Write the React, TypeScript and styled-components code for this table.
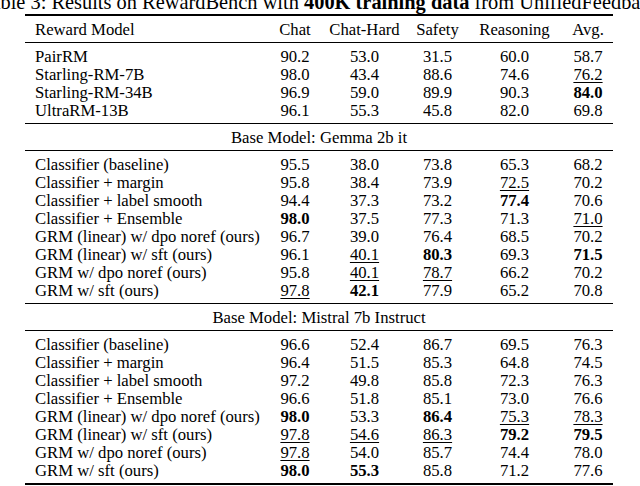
import React from 'react';
import styled, { createGlobalStyle } from 'styled-components';

const GlobalStyle = createGlobalStyle`
  html, body {
    margin: 0;
    padding: 0;
    background: #fff;
  }
  body {
    font-family: "Liberation Serif", "Times New Roman", serif;
    color: #000;
  }
`;

const Page = styled.div`
  width: 640px;
  height: 486px;
  overflow: hidden;
  background: #fff;
`;

// the caption is wider than the page and is cut at both sides
const Caption = styled.div`
  display: flex;
  justify-content: center;
  height: 14px;
  line-height: 4px;
  font-size: 20.4px;
  white-space: nowrap;

  b {
    font-weight: 700;
  }
`;

const Table = styled.div`
  margin-left: 25px;
  width: 588px;
  font-size: 16.7px;
`;

const Rule = styled.div<{ $thick?: boolean; $above: number; $below: number }>`
  height: ${(p) => (p.$thick ? 2 : 1)}px;
  background: #000;
  margin: ${(p) => p.$above}px 0 ${(p) => p.$below}px;
`;

const Row = styled.div`
  display: grid;
  grid-template-columns: 245px 50px 89px 57px 97px 50px;
  height: 18px;
  line-height: 18px;
`;

const Cell = styled.span<{ $mark?: 'b' | 'u' }>`
  text-align: center;
  white-space: nowrap;
  font-weight: ${(p) => (p.$mark === 'b' ? 700 : 400)};
  text-decoration: ${(p) => (p.$mark === 'u' ? 'underline' : 'none')};
  text-decoration-thickness: 1px;
  text-underline-offset: 2px;

  &:first-child {
    text-align: left;
    padding-left: 10px;
  }
`;

const GroupTitle = styled.div`
  height: 18px;
  line-height: 18px;
  text-align: center;
`;

// "*" marks a bold value, "_" an underlined one
type Line = [string, string, string, string, string, string];

const header: Line = ['Reward Model', 'Chat', 'Chat-Hard', 'Safety', 'Reasoning', 'Avg.'];

const baselines: Line[] = [
  ['PairRM', '90.2', '53.0', '31.5', '60.0', '58.7'],
  ['Starling-RM-7B', '98.0', '43.4', '88.6', '74.6', '_76.2'],
  ['Starling-RM-34B', '96.9', '59.0', '89.9', '90.3', '*84.0'],
  ['UltraRM-13B', '96.1', '55.3', '45.8', '82.0', '69.8'],
];

const groups: { title: string; rows: Line[] }[] = [
  {
    title: 'Base Model: Gemma 2b it',
    rows: [
      ['Classifier (baseline)', '95.5', '38.0', '73.8', '65.3', '68.2'],
      ['Classifier + margin', '95.8', '38.4', '73.9', '_72.5', '70.2'],
      ['Classifier + label smooth', '94.4', '37.3', '73.2', '*77.4', '70.6'],
      ['Classifier + Ensemble', '*98.0', '37.5', '77.3', '71.3', '_71.0'],
      ['GRM (linear) w/ dpo noref (ours)', '96.7', '39.0', '76.4', '68.5', '70.2'],
      ['GRM (linear) w/ sft (ours)', '96.1', '_40.1', '*80.3', '69.3', '*71.5'],
      ['GRM w/ dpo noref (ours)', '95.8', '_40.1', '_78.7', '66.2', '70.2'],
      ['GRM w/ sft (ours)', '_97.8', '*42.1', '77.9', '65.2', '70.8'],
    ],
  },
  {
    title: 'Base Model: Mistral 7b Instruct',
    rows: [
      ['Classifier (baseline)', '96.6', '52.4', '86.7', '69.5', '76.3'],
      ['Classifier + margin', '96.4', '51.5', '85.3', '64.8', '74.5'],
      ['Classifier + label smooth', '97.2', '49.8', '85.8', '72.3', '76.3'],
      ['Classifier + Ensemble', '96.6', '51.8', '85.1', '73.0', '76.6'],
      ['GRM (linear) w/ dpo noref (ours)', '*98.0', '53.3', '*86.4', '_75.3', '_78.3'],
      ['GRM (linear) w/ sft (ours)', '_97.8', '_54.6', '_86.3', '*79.2', '*79.5'],
      ['GRM w/ dpo noref (ours)', '_97.8', '54.0', '85.7', '74.4', '78.0'],
      ['GRM w/ sft (ours)', '*98.0', '*55.3', '85.8', '71.2', '77.6'],
    ],
  },
];

const TableRow = ({ line }: { line: Line }) => (
  <Row>
    {line.map((v, i) => {
      const mark = v[0] === '*' ? 'b' : v[0] === '_' ? 'u' : undefined;
      return (
        <Cell key={i} $mark={mark}>
          {mark ? v.slice(1) : v}
        </Cell>
      );
    })}
  </Row>
);

const MidRule = () => <Rule $above={3} $below={5} />;

export default function App() {
  return (
    <Page>
      <GlobalStyle />
      <Caption>
        <span>
          Table 3: Results on RewardBench with <b>400K training data</b> from UnifiedFeedback
        </span>
      </Caption>
      <Table>
        <Rule $thick $above={0} $below={5} />
        <TableRow line={header} />
        <MidRule />
        {baselines.map((l) => (
          <TableRow key={l[0]} line={l} />
        ))}
        {groups.map((g) => (
          <React.Fragment key={g.title}>
            <MidRule />
            <GroupTitle>{g.title}</GroupTitle>
            <MidRule />
            {g.rows.map((l) => (
              <TableRow key={l[0]} line={l} />
            ))}
          </React.Fragment>
        ))}
        <Rule $thick $above={3} $below={0} />
      </Table>
    </Page>
  );
}
